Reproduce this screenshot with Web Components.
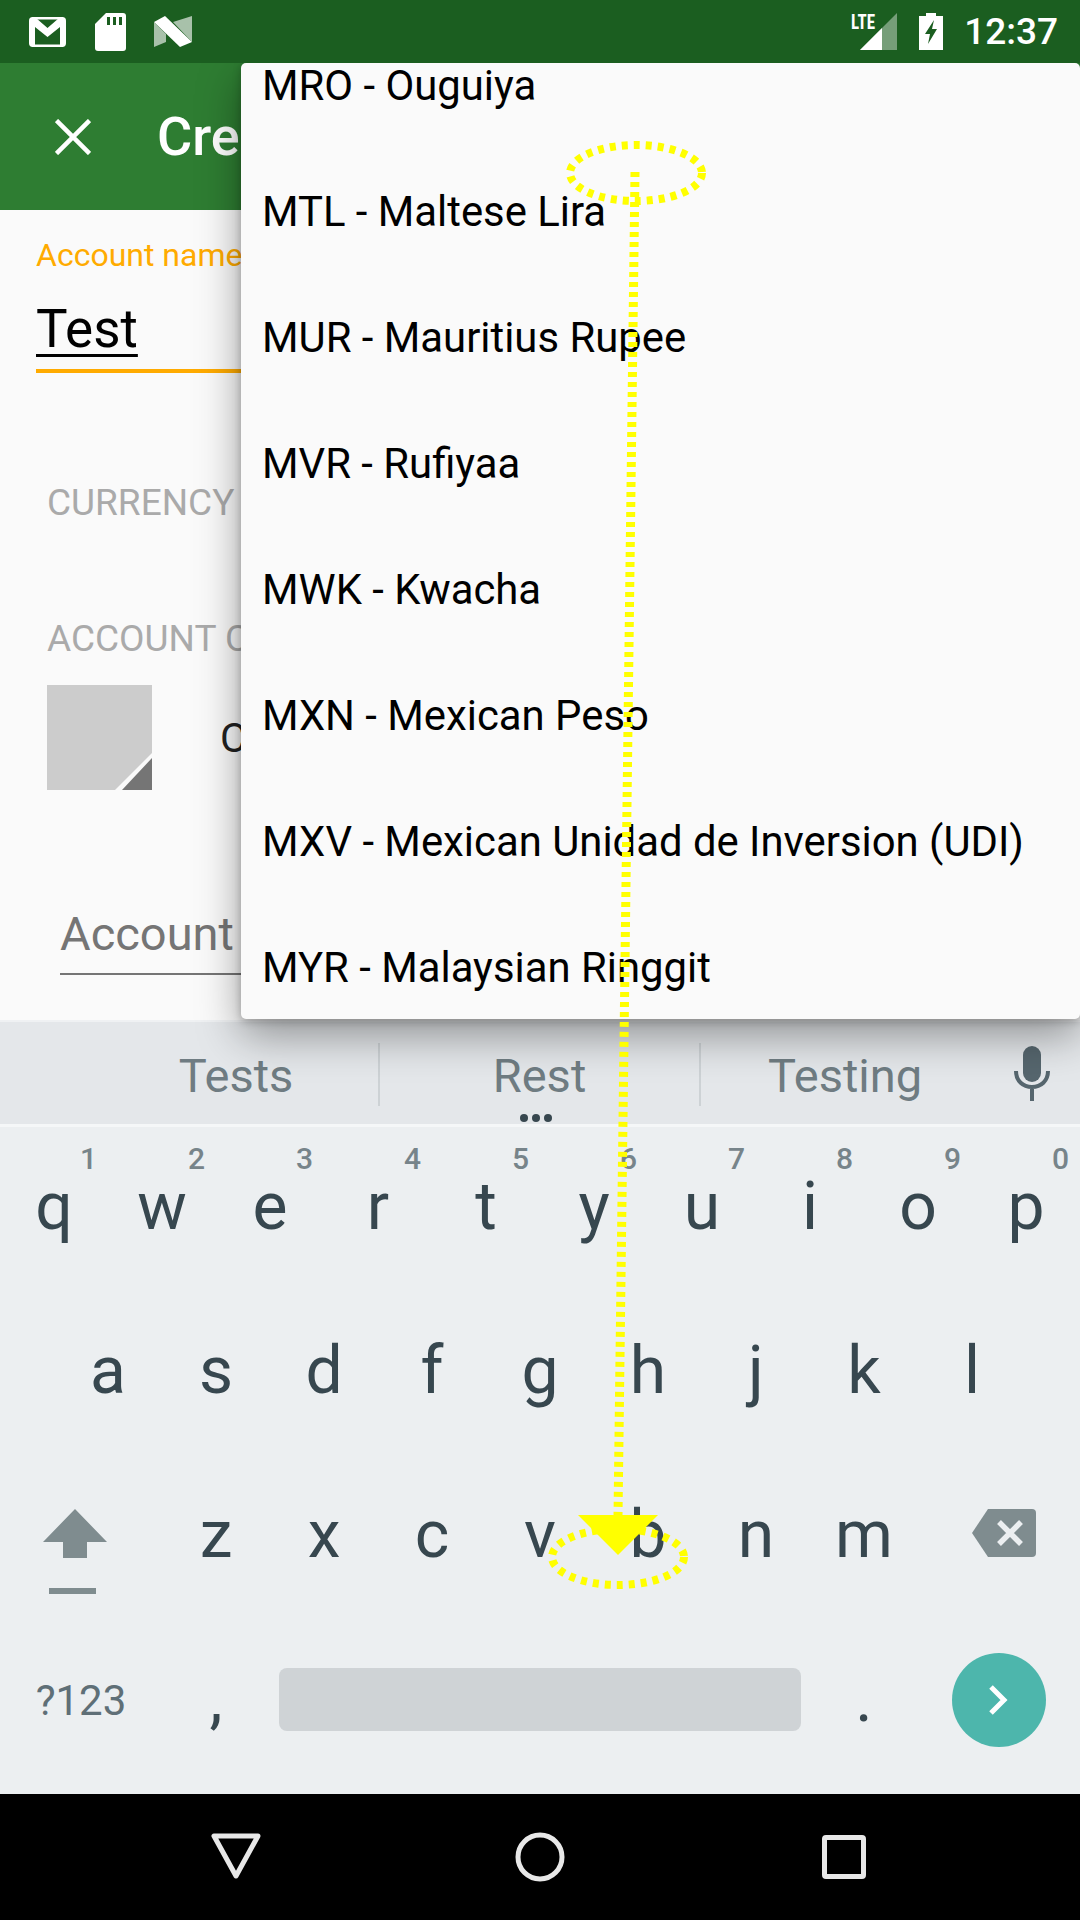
<!DOCTYPE html>
<html>
<head>
<meta charset="utf-8">
<style>
  html, body { margin: 0; padding: 0; }
  body { font-family: Roboto, "Noto Sans", sans-serif; background: #fafafa; }
</style>
</head>
<body>
<phone-screen>
  <status-bar></status-bar>
  <app-bar>Cre</app-bar>
  <account-form></account-form>
  <suggestion-strip></suggestion-strip>
  <key-board></key-board>
  <nav-bar></nav-bar>
  <currency-menu slot="over">
    <currency-item>MRO - Ouguiya</currency-item>
    <currency-item>MTL - Maltese Lira</currency-item>
    <currency-item>MUR - Mauritius Rupee</currency-item>
    <currency-item>MVR - Rufiyaa</currency-item>
    <currency-item>MWK - Kwacha</currency-item>
    <currency-item>MXN - Mexican Peso</currency-item>
    <currency-item>MXV - Mexican Unidad de Inversion (UDI)</currency-item>
    <currency-item>MYR - Malaysian Ringgit</currency-item>
  </currency-menu>
  <gesture-trace slot="over"></gesture-trace>
</phone-screen>

<script>
  // small helper, every element below is just a template + open shadow root
  const define = (name, html) => {
    const template = document.createElement("template");
    template.innerHTML = html;
    customElements.define(
      name,
      class extends HTMLElement {
        constructor() {
          super();
          this.attachShadow({ mode: "open" });
          this.shadowRoot.appendChild(template.content.cloneNode(true));
        }
      }
    );
  };

  define("phone-screen", `
<style>
  :host { display: flex; flex-direction: column; position: relative; width: 1080px; height: 1920px; overflow: hidden; background: #fafafa; }
</style>
<slot></slot>
<slot name="over"></slot>
`);

  define("status-bar", `
<style>
  :host { display: flex; align-items: center; height: 63px; padding-right: 22px; background: #1b5e20; color: #fff; position: relative; z-index: 3; font-size: 37px; font-weight: 500; }
  svg { display: block; flex: none; }
  .time { margin-left: 21px; white-space: nowrap; }
  .lte { position: relative; display: block; width: 46px; height: 37px; margin-left: auto; }
  .lte b { position: absolute; left: 0; top: -1px; font: 700 20px/20px "Liberation Sans Narrow", "Roboto Condensed", Roboto, sans-serif; transform: scaleX(.85); transform-origin: left; }
</style>
<svg style="margin-left:29px" width="37" height="30" viewBox="0 0 37 30">
  <rect x="1.2" y="1.2" width="34.6" height="27.6" rx="2.5" fill="none" stroke="#fff" stroke-width="2.4"/>
  <path d="M1 1h6l11.500 10L30 1h6v28h-5V10L18.500 20 6 10v19H1z" fill="#fff"/>
</svg>
<svg style="margin-left:29px" width="31" height="38" viewBox="0 0 31 38">
  <path d="M11 0h17a3 3 0 0 1 3 3v32a3 3 0 0 1-3 3H3a3 3 0 0 1-3-3V11z" fill="#fff"/>
  <path d="M12 4h3v8h-3zM18 4h3v8h-3zM24 4h3v8h-3z" fill="#1b5e20"/>
</svg>
<svg style="margin-left:28px" width="39" height="31" viewBox="0 0 39 31">
  <path d="M0 6l12 12v8L0 31zM19 6L38 0v26z" fill="#fff" opacity=".62"/>
  <path d="M0 6L11 0l27 26-12 5z" fill="#fff"/>
</svg>
<span class="lte" style="margin-left:auto"><b>LTE</b>
  <svg style="position:absolute;left:9px;top:0" width="37" height="37" viewBox="0 0 37 37">
    <path d="M37 0v37H0z" fill="#fff" opacity=".4"/>
    <path d="M22 15v22H0z" fill="#fff"/>
  </svg>
</span>
<svg style="margin-left:22px" width="24" height="37" viewBox="0 0 24 37">
  <path d="M7 0h10v3h7v34H0V3h7z" fill="#fff"/>
  <path d="M15 7L6 21h5l-2 10 9-15h-5z" fill="#1b5e20"/>
</svg>
<span class="time">12:37</span>
`);

  define("app-bar", `
<style>
  :host { display: flex; align-items: center; height: 147px; background: #2e7d32; color: #fff; font-size: 54px; font-weight: 500; flex: none; }
  svg { margin-left: 55px; margin-right: 66px; flex: none; }
</style>
<svg width="36" height="36" viewBox="0 0 36 36"><path d="M1.500 1.500l33 33M34.500 1.500l-33 33" stroke="#fff" stroke-width="4.500" fill="none"/></svg>
<slot></slot>
`);

  define("account-form", `
<style>
  :host { display: block; height: 810px; flex: none; background: #fafafa; overflow: hidden; }
  .name { margin: 26px 0 0 36px; font-size: 32px; line-height: 38px; color: #ffab00; white-space: nowrap; }
  .value { margin: 25px 0 0 36px; height: 60px; font-size: 53px; line-height: 60px; color: #000; }
  .value u { text-decoration-thickness: 3px; text-underline-offset: 7px; }
  .rule { margin: 10px 0 0 36px; height: 4px; background: #ffab00; }
  .head { margin-left: 47px; font-size: 37px; line-height: 40px; color: #aaa; white-space: nowrap; }
  .colour { display: flex; align-items: center; margin: 26px 0 0 47px; }
  .swatch { width: 105px; height: 105px; flex: none; display: block; }
  .colour span { margin-left: 68px; font-size: 41px; color: #212121; }
  .desc { margin: 116px 0 0 60px; font-size: 47px; line-height: 56px; color: #757575; }
  .desc-rule { margin: 11px 0 0 60px; height: 2px; background: #757575; }
</style>
<div class="name">Account name</div>
<div class="value"><u>Test</u></div>
<div class="rule"></div>
<div class="head" style="margin-top:110px">CURRENCY</div>
<div class="head" style="margin-top:96px">ACCOUNT C</div>
<div class="colour">
  <svg class="swatch" viewBox="0 0 105 105">
    <rect width="105" height="105" fill="#ccc"/>
    <path d="M105 68v37H68z" fill="#fafafa"/>
    <path d="M105 73v32H75z" fill="#757575"/>
  </svg>
  <span>C</span>
</div>
<div class="desc">Account</div>
<div class="desc-rule"></div>
`);

  define("currency-menu", `
<style>
  :host { display: block; position: absolute; left: 241px; top: 63px; right: 0; height: 956px; background: #fafafa; border-radius: 5px; box-shadow: 0 16px 44px rgba(0,0,0,.38), 0 2px 8px rgba(0,0,0,.24); z-index: 2; }
  .clip { height: 100%; overflow: hidden; border-radius: 5px; }
  .list { margin-top: -41px; }
</style>
<div class="clip"><div class="list"><slot></slot></div></div>
`);

  define("currency-item", `
<style>
  :host { display: flex; align-items: center; height: 126px; padding-left: 21px; font-size: 41.850px; color: #000; white-space: nowrap; }
</style>
<slot></slot>
`);

  define("suggestion-strip", `
<style>
  :host { display: flex; flex: none; align-items: center; position: relative; height: 102px; padding-left: 94px; background: #e4e7ea; border-top: 2px solid #eff1f3; border-bottom: 3px solid #f5f7f8; font-size: 47px; color: #6f7c82; }
  .cell { text-align: center; padding-top: 4px; }
  .sep { width: 2px; height: 63px; margin-top: 2px; background: #cdd2d5; flex: none; }
  .more { position: absolute; left: 520px; top: 92px; display: flex; gap: 4px; }
  .more i { width: 8px; height: 8px; border-radius: 50%; background: #37474f; }
  svg { margin: 2px 0 0 24px; flex: none; }
</style>
<div class="cell" style="width:284px">Tests</div>
<div class="sep"></div>
<div class="cell" style="width:319px">Rest</div>
<div class="sep"></div>
<div class="cell" style="width:288px">Testing</div>
<svg width="38" height="56" viewBox="0 0 38 56">
  <rect x="10" y="0" width="18" height="36" rx="9" fill="#56666e"/>
  <path d="M3 25c0 10 7 16 16 16s16-6 16-16M19 41v14" stroke="#56666e" stroke-width="4" fill="none"/>
</svg>
<div class="more"><i></i><i></i><i></i></div>
`);

  define("key-cap", `
<style>
  :host { display: flex; flex: none; justify-content: center; align-items: center; position: relative; width: 108px; padding-bottom: 6px; box-sizing: border-box; font-size: 66px; color: #37474f; }
  .hint { position: absolute; right: 11px; top: 14px; font-size: 30px; font-weight: 500; color: #77848a; }
</style>
<slot></slot><span class="hint"><slot name="hint"></slot></span>
`);

  define("key-board", `
<style>
  :host { display: grid; grid-template-rows: repeat(4, 164px); height: 667px; flex: none; background: #eceff1; }
  .row { display: flex; justify-content: center; align-items: stretch; }
  .wide { display: flex; justify-content: center; align-items: center; flex: none; width: 162px; }
  .sym { font-size: 42px; color: #5f6f77; padding-bottom: 2px; box-sizing: border-box; }
  .bar { display: flex; flex: none; width: 540px; align-items: center; justify-content: center; padding-bottom: 4px; box-sizing: border-box; }
  .bar div { width: 522px; height: 63px; border-radius: 8px; background: #cfd3d6; }
  .enter { display: flex; justify-content: center; align-items: center; width: 94px; height: 94px; margin-bottom: 2px; border-radius: 50%; background: #4db6ac; }
  .shift { display: block; margin: 30px 12px 0 0; }
  .del { margin: 0 0 8px 10px; }
</style>
<div class="row">
  ${[..."qwertyuiop"].map((k, i) => `<key-cap>${k}<span slot="hint">${(i + 1) % 10}</span></key-cap>`).join("")}
</div>
<div class="row">
  ${[..."asdfghjkl"].map((k) => `<key-cap>${k}</key-cap>`).join("")}
</div>
<div class="row">
  <div class="wide"><svg class="shift" width="64" height="86" viewBox="0 0 64 86">
    <path d="M32 0l32 33H44v16H20V33H0z" fill="#7f8c8f"/>
    <rect x="6" y="79" width="47" height="6" fill="#7f8c8f"/>
  </svg></div>
  ${[..."zxcvbnm"].map((k) => `<key-cap>${k}</key-cap>`).join("")}
  <div class="wide"><svg class="del" width="64" height="48" viewBox="0 0 64 48">
    <path d="M16 0h44a4 4 0 0 1 4 4v40a4 4 0 0 1-4 4H16L0 24z" fill="#7f8c8f"/>
    <path d="M27 13l22 22M49 13L27 35" stroke="#eceff1" stroke-width="5.500" fill="none"/>
  </svg></div>
</div>
<div class="row">
  <div class="wide sym">?123</div>
  <key-cap>,</key-cap>
  <div class="bar"><div></div></div>
  <key-cap>.</key-cap>
  <div class="wide"><div class="enter"><svg width="22" height="32" viewBox="0 0 22 32"><path d="M3 3l13 13L3 29" stroke="#fff" stroke-width="5" fill="none"/></svg></div></div>
</div>
`);

  define("nav-bar", `
<style>
  :host { display: flex; flex: 1; align-items: center; justify-content: center; background: #000; }
  svg { display: block; }
</style>
<svg width="720" height="60" viewBox="0 0 720 60">
  <g fill="none" stroke="#e8e8e8" stroke-width="5" stroke-linejoin="round">
    <path d="M34 9h44L56 49z"/>
    <circle cx="360" cy="30" r="22"/>
    <rect x="644.500" y="10.500" width="39" height="39" rx="1.500"/>
  </g>
</svg>
`);

  define("gesture-trace", `
<style>
  :host { display: block; position: absolute; left: 0; top: 0; width: 1080px; height: 1920px; z-index: 4; pointer-events: none; }
</style>
<svg width="1080" height="1920" viewBox="0 0 1080 1920" fill="none" stroke="#ffff00">
  <ellipse cx="636" cy="173" rx="66" ry="28" stroke-width="8" stroke-dasharray="6 6"/>
  <path d="M635 172L618 1516" stroke-width="9" stroke-dasharray="5 5"/>
  <path d="M578 1515h80l-40 40z" fill="#ffff00" stroke="none"/>
  <ellipse cx="618" cy="1557" rx="66" ry="28" stroke-width="8" stroke-dasharray="6 6"/>
</svg>
`);
</script>
</body>
</html>
